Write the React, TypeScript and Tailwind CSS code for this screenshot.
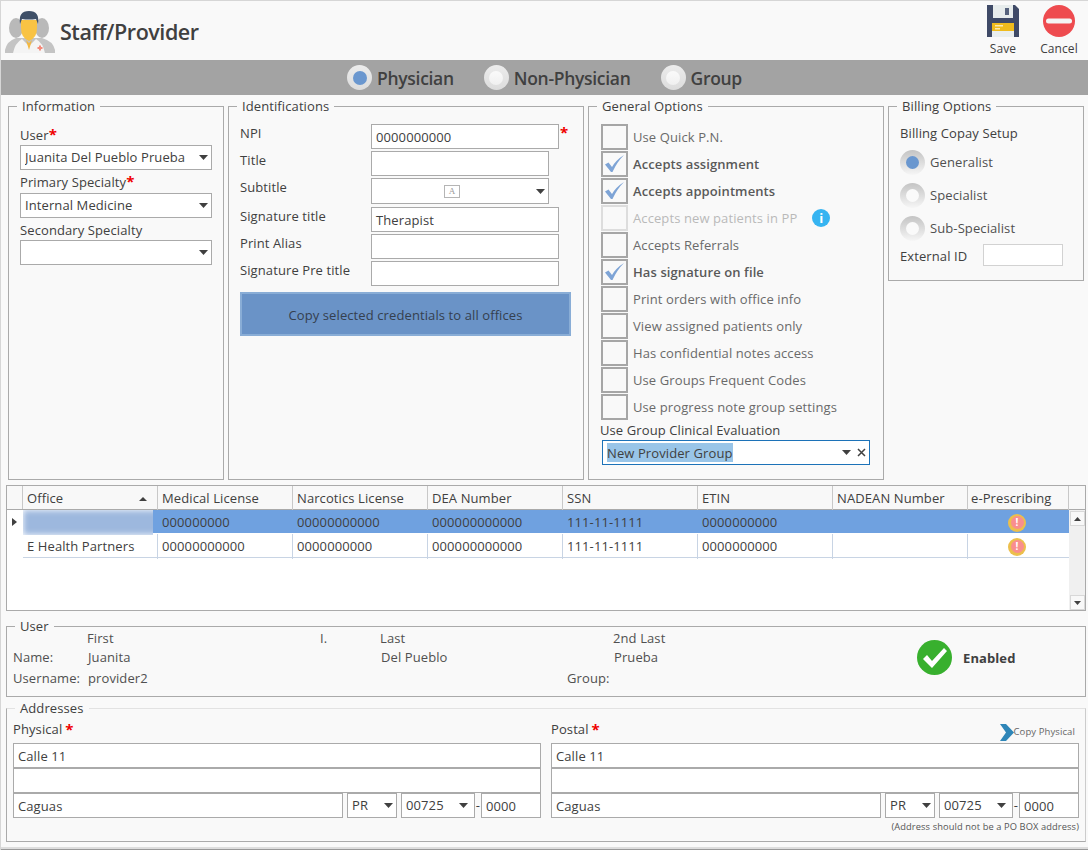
import React from "react";

const Caret = () => (
  <svg width="9" height="5" viewBox="0 0 9 5" className="shrink-0">
    <polygon points="0,0 9,0 4.5,5" fill="#404040" />
  </svg>
);

const Field = ({ value = "", className = "" }: { value?: string; className?: string }) => (
  <div className={`h-[25px] border border-[#aaaaaa] bg-white pl-[4px] leading-[24px] truncate ${className}`}>{value}</div>
);

const Select = ({ value = "", className = "" }: { value?: string; className?: string }) => (
  <div className={`h-[25px] flex items-center justify-between border border-[#aaaaaa] bg-white pl-[4px] pr-[3px] ${className}`}>
    <span className="truncate pt-[1px]">{value}</span>
    <Caret />
  </div>
);

const Star = () => <span className="text-[#f00000] font-bold leading-none text-[15px]">*</span>;

const Panel = ({ title, className = "", children }: { title: string; className?: string; children: React.ReactNode }) => (
  <fieldset className={`border border-[#aaaaaa] min-w-0 ${className}`}>
    <legend className="ml-[8px] px-[5px] h-[18px] leading-[18px] text-[#404040]">{title}</legend>
    {children}
  </fieldset>
);

const TopRadio = ({ label, on = false }: { label: string; on?: boolean }) => (
  <div className="flex items-center gap-[5px]">
    <div className="w-[25px] h-[25px] rounded-full bg-gradient-to-b from-[#ececec] to-[#dcdcdc] flex items-center justify-center">
      {on ? (
        <div className="w-[14px] h-[14px] rounded-full bg-[#6a97cf]" />
      ) : (
        <div className="w-[14px] h-[14px] rounded-full bg-gradient-to-b from-[#fafafa] to-[#f0f0f0]" />
      )}
    </div>
    <span className="pt-[2px] text-[17.5px] font-semibold text-[#404040] tracking-[-0.3px]">{label}</span>
  </div>
);

const BillRadio = ({ label, on = false }: { label: string; on?: boolean }) => (
  <div className="h-[33px] flex items-center gap-[5px]">
    <div className="w-[25px] h-[25px] rounded-full bg-gradient-to-b from-[#c4c4c4] to-[#f6f6f6] flex items-center justify-center">
      <div className={on ? "w-[13px] h-[13px] rounded-full bg-[#6a97cf]" : "w-[13px] h-[13px] rounded-full bg-[#fafafa]"} />
    </div>
    <span className="text-[#505050]">{label}</span>
  </div>
);

type Opt = { label: string; checked?: boolean; disabled?: boolean; info?: boolean };

const options: Opt[] = [
  { label: "Use Quick P.N." },
  { label: "Accepts assignment", checked: true },
  { label: "Accepts appointments", checked: true },
  { label: "Accepts new patients in PP", disabled: true, info: true },
  { label: "Accepts Referrals" },
  { label: "Has signature on file", checked: true },
  { label: "Print orders with office info" },
  { label: "View assigned patients only" },
  { label: "Has confidential notes access" },
  { label: "Use Groups Frequent Codes" },
  { label: "Use progress note group settings" },
];

const OptionRow = ({ opt }: { opt: Opt }) => (
  <div className="h-[27px] flex items-center gap-[5px]">
    <div
      className={
        opt.disabled
          ? "w-[27px] h-[26px] border-2 border-[#dddddd] flex items-center justify-center"
          : "w-[27px] h-[26px] border-2 border-[#a6a6a6] flex items-center justify-center"
      }
    >
      {opt.checked && (
        <svg width="21" height="19" viewBox="0 0 21 19">
          <path d="M1 10.5 L4.5 8.5 L8 13 Q12 6 20 1 Q13 8 8.5 18 L7 18 Z" fill="#7ea4d6" />
        </svg>
      )}
    </div>
    <span
      className={
        opt.disabled
          ? "pt-[2px] text-[#b9b9b9]"
          : opt.checked
            ? "pt-[2px] font-semibold text-[#595959]"
            : "pt-[2px] text-[#6a6a6a]"
      }
    >
      {opt.label}
    </span>
    {opt.info && (
      <div className="ml-[10px] w-[18px] h-[18px] rounded-full bg-[#36b4f1] text-white text-[13px] font-bold leading-[18px] text-center">
        i
      </div>
    )}
  </div>
);

const WarnIcon = () => (
  <div className="w-[18px] h-[18px] rounded-full bg-[#ecbf4c] flex items-center justify-center">
    <div className="w-[13px] h-[13px] rounded-full bg-[#f98e8e] text-white text-[10px] font-bold leading-[13px] text-center">!</div>
  </div>
);

const columns = [
  "Office",
  "Medical License",
  "Narcotics License",
  "DEA Number",
  "SSN",
  "ETIN",
  "NADEAN Number",
  "e-Prescribing",
];

const row1 = ["", "000000000", "00000000000", "000000000000", "111-11-1111", "0000000000", ""];
const row2 = ["E Health Partners", "00000000000", "0000000000", "000000000000", "111-11-1111", "0000000000", ""];

const gridCols = "grid grid-cols-[135px_135px_135px_135px_135px_135px_135px_101px]";

const AddressColumn = ({ title, postal = false }: { title: string; postal?: boolean }) => (
  <div>
    <div className="h-[18px] mb-[5px] leading-[18px] flex items-center justify-between text-[#404040]">
      <span className="flex items-center gap-[3px]">
        {title} <Star />
      </span>
      {postal && (
        <span className="flex items-center text-[9.5px] text-[#666666] pr-[4px] pt-[6px]">
          <svg width="14" height="17" viewBox="0 0 14 17">
            <polygon points="0,0 6,0 14,8.5 6,17 0,17 6,8.5" fill="#2f86b8" />
          </svg>
          Copy Physical
        </span>
      )}
    </div>
    <Field value="Calle 11" />
    <Field />
    <div className="flex items-center">
      <Field value="Caguas" className="w-[330px] bg-[#f6f6f6]" />
      <Select value="PR" className="w-[50px] ml-[4px]" />
      <Select value="00725" className="w-[74px] ml-[4px] pr-[6px]" />
      <span className="w-[6px] text-center leading-none">-</span>
      <Field value="0000" className="flex-1" />
    </div>
    {postal && <div className="text-right text-[9.3px] leading-[18px] text-[#555555]">(Address should not be a PO BOX address)</div>}
  </div>
);

export default function App() {
  return (
    <div className="w-[1088px] h-[850px] overflow-hidden bg-[#f9f9f9] border-t border-l border-[#d6d6d6] font-['Open_Sans',sans-serif] text-[13px] tracking-[0.1px] text-[#404040]">
      {/* Title */}
      <header className="h-[59px] flex items-start justify-between">
        <div className="flex items-center pt-[7px] pl-[4px]">
          <svg width="50" height="45" viewBox="0 0 50 45">
            <ellipse cx="11" cy="20" rx="7" ry="10" fill="#b9b9b9" />
            <ellipse cx="37" cy="20" rx="7" ry="10" fill="#b9b9b9" />
            <path d="M0 42 Q2 33 11 30 L37 30 Q48 33 50 42 V45 H0 Z" fill="#c4c4c4" />
            <path d="M8 45 Q10 35 17 31 L24 38 L31 31 Q38 35 40 45 Z" fill="#f4f4f4" />
            <path d="M16 12 H32 V20 Q32 30 24 33 Q16 30 16 20 Z" fill="#f9c343" />
            <path d="M15 16 Q13 3 24 3 Q35 3 33 16 L31 11 Q24 12 17 11 Z" fill="#3f5068" />
            <path d="M21 32 L24 42 L27 32 L24 35 Z" fill="#f4b942" />
            <rect x="32.5" y="39" width="5" height="2" fill="#f48a7a" />
            <rect x="34" y="37.5" width="2" height="5" fill="#f48a7a" />
          </svg>
          <h1 className="ml-[5px] pt-[3px] text-[21.5px] font-semibold text-[#404040] tracking-[-0.45px]">Staff/Provider</h1>
        </div>
        <div className="flex text-[12px] text-[#404040] pr-[1px] pt-[4px]">
          <button className="w-[56px] flex flex-col items-center gap-[3px]">
            <svg width="32" height="32" viewBox="0 0 32 32">
              <path d="M0 0 H28 L32 4 V32 H0 Z" fill="#3f4a67" />
              <rect x="6" y="0" width="20" height="13" fill="#e7ecec" />
              <rect x="18" y="3" width="4" height="7" fill="#56627c" />
              <rect x="5" y="18" width="22" height="14" fill="#e9eeee" />
              <rect x="5" y="18" width="22" height="8" fill="#efbb1c" />
              <rect x="8" y="20" width="8" height="1.5" fill="#fbe9b0" />
              <rect x="8" y="23" width="5" height="1.5" fill="#fbe9b0" />
            </svg>
            <span>Save</span>
          </button>
          <button className="w-[56px] flex flex-col items-center gap-[3px]">
            <svg width="32" height="32" viewBox="0 0 32 32">
              <circle cx="16" cy="16" r="16" fill="#ee4b4f" />
              <rect x="3" y="13.5" width="26" height="5" rx="2.5" fill="#f4f4f4" />
            </svg>
            <span>Cancel</span>
          </button>
        </div>
      </header>

      {/* Provider type */}
      <div className="h-[35px] bg-[#a3a3a3] flex items-center justify-center gap-[30px]">
        <TopRadio label="Physician" on />
        <TopRadio label="Non-Physician" />
        <TopRadio label="Group" />
      </div>

      {/* Top panels */}
      <div className="flex items-start gap-[4px] pl-[7px] pt-[2px]">
        <Panel title="Information" className="w-[216px] h-[383px]">
          <div className="px-[11px] pt-[11px]">
            <div className="h-[18px] leading-[18px]">User<Star /></div>
            <Select value="Juanita Del Pueblo Prueba" className="mt-[1px]" />
            <div className="h-[18px] leading-[18px] mt-[3px]">Primary Specialty<Star /></div>
            <Select value="Internal Medicine" className="mt-[2px]" />
            <div className="h-[18px] leading-[18px] mt-[3px]">Secondary Specialty</div>
            <Select className="mt-[1px]" />
          </div>
        </Panel>

        <Panel title="Identifications" className="w-[356px] h-[383px]">
          <div className="pl-[11px] pt-[9px]">
            <div className="flex items-start h-[27px]">
              <span className="w-[131px] leading-[18px]">NPI</span>
              <Field value="0000000000" className="w-[188px]" />
              <span className="ml-[1px]"><Star /></span>
            </div>
            <div className="flex items-start h-[27px]">
              <span className="w-[131px] leading-[18px]">Title</span>
              <Field className="w-[178px]" />
            </div>
            <div className="flex items-start h-[29px]">
              <span className="w-[131px] leading-[18px]">Subtitle</span>
              <div className="w-[178px] h-[26px] border border-[#aaaaaa] bg-white flex items-center justify-between pr-[3px]">
                <span className="ml-[72px] w-[16px] h-[13px] border border-[#b5b5b5] text-[9px] leading-[11px] text-center text-[#999999] font-['Liberation_Serif',serif]">A</span>
                <Caret />
              </div>
            </div>
            {["Signature title", "Print Alias", "Signature Pre title"].map((label) => (
              <div key={label} className="flex items-start h-[27px]">
                <span className="w-[131px] leading-[18px]">{label}</span>
                <Field value={label === "Signature title" ? "Therapist" : ""} className="w-[188px]" />
              </div>
            ))}
            <button className="mt-[4px] w-[331px] h-[44px] pt-[3px] bg-[#6a93c7] border-2 border-[#89add6] text-[#35404f]">
              Copy selected credentials to all offices
            </button>
          </div>
        </Panel>

        <Panel title="General Options" className="w-[296px] h-[383px]">
          <div className="pl-[12px] pt-[8px]">
            {options.map((opt) => (
              <OptionRow key={opt.label} opt={opt} />
            ))}
            <div className="h-[18px] leading-[18px] mt-[1px] -ml-[1px]">Use Group Clinical Evaluation</div>
            <div className="mt-[1px] ml-[1px] w-[268px] h-[25px] border border-[#1c72b8] bg-white flex items-center justify-between pl-[4px] pr-[3px]">
              <span className="bg-[#99c5e8] h-[19px] leading-[20px] w-[126px]">New Provider Group</span>
              <span className="flex items-center gap-[6px]">
                <Caret />
                <svg width="9" height="9" viewBox="0 0 9 9">
                  <path d="M1 1 L8 8 M8 1 L1 8" stroke="#404040" strokeWidth="1.5" />
                </svg>
              </span>
            </div>
          </div>
        </Panel>

        <Panel title="Billing Options" className="w-[196px] h-[184px]">
          <div className="pl-[11px] pt-[9px]">
            <div className="h-[18px] leading-[18px] mb-[4px]">Billing Copay Setup</div>
            <BillRadio label="Generalist" on />
            <BillRadio label="Specialist" />
            <BillRadio label="Sub-Specialist" />
            <div className="flex items-center -mt-[1px]">
              <span className="w-[83px] pt-[3px]">External ID</span>
              <div className="w-[80px] h-[22px] bg-white border border-[#d2d2d2]" />
            </div>
          </div>
        </Panel>
      </div>

      {/* Offices grid */}
      <div className="ml-[5px] mt-[5px] w-[1080px] h-[126px] border border-[#aaaaaa] bg-white">
        <div className="h-[24px] flex bg-[#f8f8f8] border-b border-[#aaaaaa]">
          <div className="w-[16px] border-r border-[#c8c8c8]" />
          <div className={`${gridCols} w-[1046px]`}>
            {columns.map((col, i) => (
              <div
                key={col}
                className={
                  i === 7
                    ? "border-r border-[#c8c8c8] pl-[3px] leading-[25px] flex items-center justify-between pr-[10px]"
                    : "border-r border-[#c8c8c8] pl-[4px] leading-[25px] flex items-center justify-between pr-[10px]"
                }
              >
                <span>{col}</span>
                {i === 0 && (
                  <svg width="8" height="4" viewBox="0 0 8 4">
                    <polygon points="0,4 8,4 4,0" fill="#404040" />
                  </svg>
                )}
              </div>
            ))}
          </div>
        </div>
        <div className="flex h-[100px]">
          <div className="w-[16px] pt-[8px] pl-[5px]">
            <svg width="5" height="8" viewBox="0 0 5 8">
              <polygon points="0,0 5,4 0,8" fill="#404040" />
            </svg>
          </div>
          <div className="w-[1046px]">
            <div className={`${gridCols} h-[24px] bg-[#6fa1e0] border-b border-white`}>
              <div className="overflow-hidden">
                <div className="w-[130px] h-full bg-white overflow-hidden">
                  <div className="w-[140px] h-full bg-[#9db8de] blur-[3px]" />
                </div>
              </div>
              {row1.slice(1).map((cell, i) => (
                <div key={i} className="pl-[4px] leading-[25px]">{cell}</div>
              ))}
              <div className="flex items-center justify-center pr-[3px]"><WarnIcon /></div>
            </div>
            <div className={`${gridCols} h-[24px] border-b border-[#c8d4e4]`}>
              {row2.map((cell, i) => (
                <div key={i} className="pl-[4px] leading-[25px] border-r border-[#c8d4e4]">{cell}</div>
              ))}
              <div className="flex items-center justify-center pr-[3px]"><WarnIcon /></div>
            </div>
          </div>
          <div className="w-[16px] bg-[#f0f0f0] flex flex-col justify-between items-center">
            <div className="w-[15px] h-[15px] mt-[1px] bg-[#f8f8f8] border border-[#d8d8d8] flex items-center justify-center">
              <svg width="7" height="4" viewBox="0 0 7 4"><polygon points="0,4 7,4 3.5,0" fill="#404040" /></svg>
            </div>
            <div className="w-[15px] h-[15px] bg-[#f8f8f8] border border-[#d8d8d8] flex items-center justify-center">
              <svg width="7" height="4" viewBox="0 0 7 4"><polygon points="0,0 7,0 3.5,4" fill="#404040" /></svg>
            </div>
          </div>
        </div>
      </div>

      {/* User */}
      <Panel title="User" className="ml-[5px] mt-[6px] w-[1080px] h-[80px]">
        <div className="-mt-[7px] pl-[6px] grid grid-cols-[74px_233px_60px_187px_46px_304px_46px_auto] grid-rows-[19px_20px_21px] items-center leading-[18px] text-[#505050]">
          <span />
          <span>First</span>
          <span>I.</span>
          <span className="col-span-2">Last</span>
          <span>2nd Last</span>
          <span className="row-span-3 self-start mt-[12px]">
            <svg width="35" height="35" viewBox="0 0 35 35">
              <circle cx="17.5" cy="17.5" r="17.5" fill="#38b02e" />
              <path d="M6 19 L10 15 L15 21 L27 8 L30 11 L15 28 Z" fill="#ffffff" />
            </svg>
          </span>
          <span className="row-span-3 font-bold text-[#404040] mt-[-1px]">Enabled</span>
          <span>Name:</span>
          <span className="pl-[1px]">Juanita</span>
          <span />
          <span className="col-span-2 pl-[1px]">Del Pueblo</span>
          <span className="pl-[1px]">Prueba</span>
          <span>Username:</span>
          <span className="pl-[1px]">provider2</span>
          <span />
          <span />
          <span className="whitespace-nowrap">Group:</span>
          <span />
        </div>
      </Panel>

      {/* Addresses */}
      <fieldset className="ml-[5px] mt-[2px] w-[1080px] h-[143px] border border-[#aaaaaa] border-t-[#e2e2e2] border-r-[#cccccc]">
        <legend className="ml-[8px] px-[5px] h-[18px] leading-[18px]">Addresses</legend>
        <div className="pl-[6px] pt-[3px] grid grid-cols-[528px_528px] gap-x-[10px]">
          <AddressColumn title="Physical" />
          <AddressColumn title="Postal" postal />
        </div>
      </fieldset>

      <div className="mt-[5px] h-[3px] bg-[#dddddd] border-b border-[#999999]" />
    </div>
  );
}
